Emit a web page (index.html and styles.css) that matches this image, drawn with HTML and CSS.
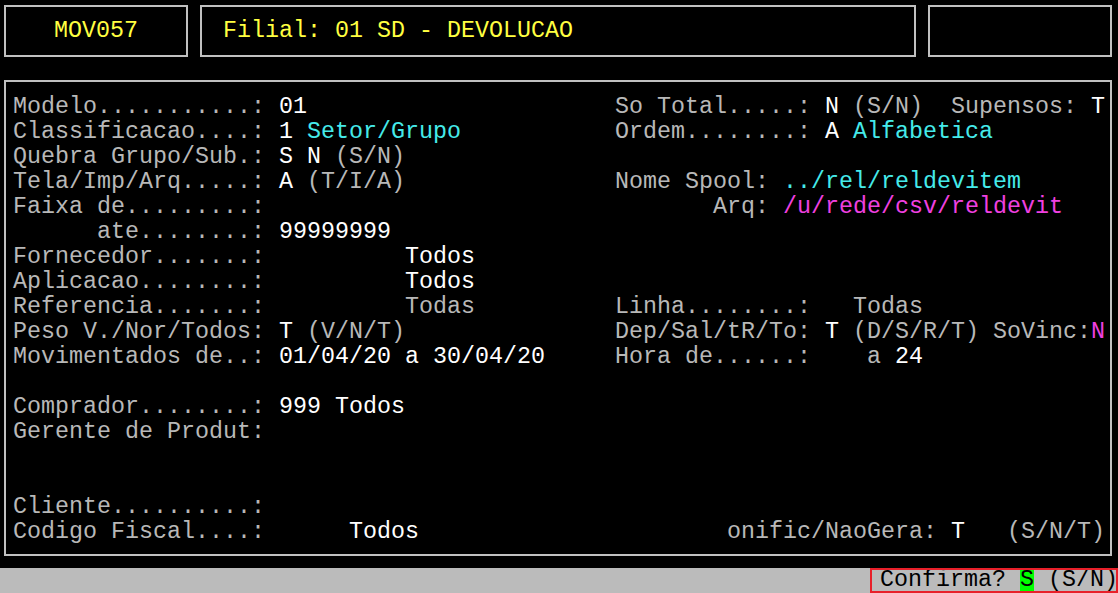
FILE: index.html
```html
<!DOCTYPE html>
<html lang="pt">
<head>
    <meta charset="UTF-8">
    <title>MOV057</title>
    <link rel="stylesheet" href="styles.css">
</head>
<body>
    <div class="top">
        <div class="box prog">MOV057</div>
        <div class="box filial">Filial: 01 SD - DEVOLUCAO</div>
        <div class="box spare"></div>
    </div>
    <div class="box screen">
        <div class="row">Modelo...........: <span class="v">01</span>                      So Total.....: <span class="v">N</span> (S/N)  Supensos: <span class="v">T</span></div>
        <div class="row">Classificacao....: <span class="v">1</span> <span class="c">Setor/Grupo</span>           Ordem........: <span class="v">A</span> <span class="c">Alfabetica</span></div>
        <div class="row">Quebra Grupo/Sub.: <span class="v">S</span> <span class="v">N</span> (S/N)</div>
        <div class="row">Tela/Imp/Arq.....: <span class="v">A</span> (T/I/A)               Nome Spool: <span class="c">../rel/reldevitem</span></div>
        <div class="row">Faixa de.........:                                Arq: <span class="m">/u/rede/csv/reldevit</span></div>
        <div class="row">      ate........: <span class="v">99999999</span></div>
        <div class="row">Fornecedor.......:          <span class="v">Todos</span></div>
        <div class="row">Aplicacao........:          <span class="v">Todos</span></div>
        <div class="row">Referencia.......:          Todas          Linha........:   Todas</div>
        <div class="row">Peso V./Nor/Todos: <span class="v">T</span> (V/N/T)               Dep/Sal/tR/To: <span class="v">T</span> (D/S/R/T) SoVinc:<span class="m">N</span></div>
        <div class="row">Movimentados de..: <span class="v">01/04/20 a 30/04/20</span>     Hora de......:    a <span class="v">24</span></div>
        <div class="row"></div>
        <div class="row">Comprador........: <span class="v">999 Todos</span></div>
        <div class="row">Gerente de Produt:</div>
        <div class="row"></div>
        <div class="row"></div>
        <div class="row">Cliente..........:</div>
        <div class="row">Codigo Fiscal....:      <span class="v">Todos</span>                      onific/NaoGera: <span class="v">T</span>   (S/N/T)</div>
    </div>
    <div class="status">
        <div class="confirm">Confirma? <span class="hl">S</span> (S/N)</div>
    </div>
</body>
</html>
```

FILE: styles.css
```css
*{
    padding:0;
    margin:0;
    box-sizing:border-box;
}
html,body{
    width:100%;
    height:100%;
    background-color:#000;
    overflow:hidden;
}
body{
    padding:5px 6px 0 4px;
    font-family:"Liberation Mono","Courier New",monospace;
    font-size:23.33px;
    line-height:25px;
    color:#b8b8b8;
}
.box{
    border:2px solid #c0c0c0;
}
.top{
    display:flex;
    gap:12px;
    height:52px;
}
.prog{
    width:184px;
    display:flex;
    align-items:center;
    justify-content:center;
    color:#ffff40;
}
.filial{
    flex:1;
    display:flex;
    align-items:center;
    padding-left:21px;
    color:#ffff40;
    white-space:pre;
}
.spare{
    width:184px;
}
.screen{
    margin-top:23px;
    padding:13px 0 9px 7px;
}
.row{
    height:25px;
    white-space:pre;
}
.v{
    color:#fff;
}
.c{
    color:#45eaea;
}
.m{
    color:#f040e0;
}
.status{
    margin:12px -6px 0 -4px;
    height:25px;
    background-color:#bbb;
    display:flex;
    justify-content:flex-end;
}
.confirm{
    width:248px;
    height:25px;
    padding-left:8px;
    border:2px solid #e8202a;
    line-height:21px;
    color:#000;
    white-space:pre;
    overflow:hidden;
}
.hl{
    background-color:#00ff00;
}
```
